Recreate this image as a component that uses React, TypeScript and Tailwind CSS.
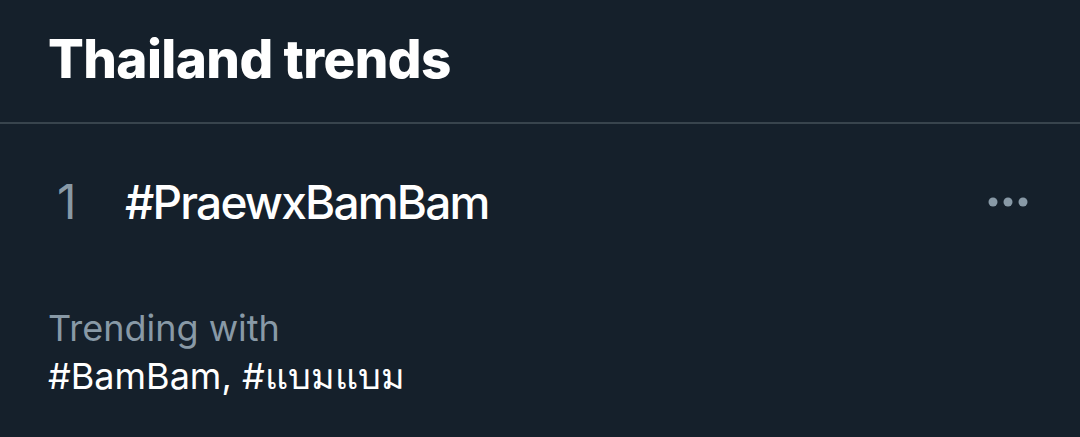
const App = () => {
  return (
    <div className="w-[1080px] h-[437px] bg-[#15202b] overflow-hidden font-['Inter','Noto_Sans',sans-serif] antialiased">
      {/* header */}
      <div className="h-[124px] border-b-2 border-[#38444d] px-12 flex items-center">
        <h2 className="text-[53px] font-extrabold text-white leading-none tracking-[-0.6px] -mt-[4px]">Thailand trends</h2>
      </div>

      {/* trend item */}
      <div className="px-12 pt-[54px]">
        <div className="flex items-center">
          <span className="w-[77px] pl-[9px] text-[48px] leading-none text-[#8899a6]">1</span>
          <span className="flex-1 text-[46px] leading-none font-medium text-white tracking-[-1.8px]">#PraewxBamBam</span>
          <svg width="40" height="10" viewBox="0 0 40 10" className="mr-[4px]" fill="#8899a6">
            <circle cx="5" cy="5" r="4.5" />
            <circle cx="20" cy="5" r="4.5" />
            <circle cx="35" cy="5" r="4.5" />
          </svg>
        </div>
        <div className="mt-[78px] text-[36px] leading-[48px] text-[#8899a6]">Trending with</div>
        <div className="text-[36px] leading-[48px] text-white">#BamBam, #แบมแบม</div>
      </div>
    </div>
  );
};

export default App;
